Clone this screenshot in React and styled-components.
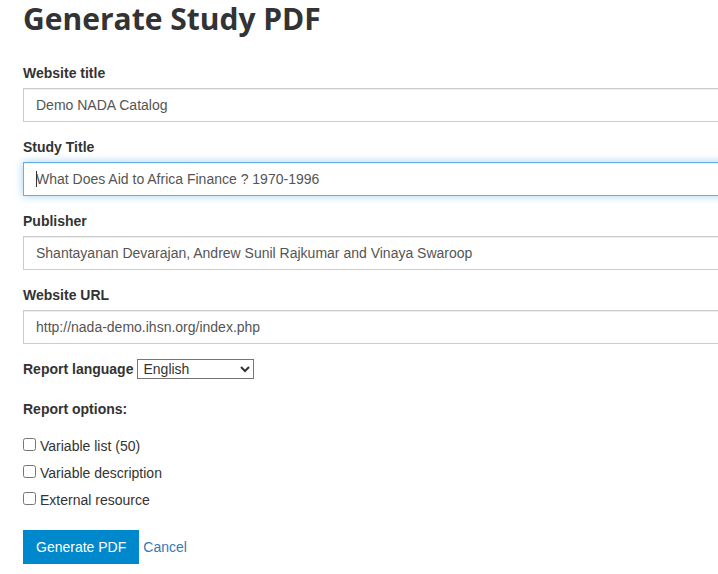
import React, { useState } from "react";
import styled, { createGlobalStyle } from "styled-components";

const GlobalStyle = createGlobalStyle`
  *, *::before, *::after { box-sizing: border-box; }
  body {
    margin: 0;
    overflow-x: hidden;
    background: #fff;
    color: #333;
    font: 14px/20px "Liberation Sans", Arial, sans-serif;
  }
`;

const Form = styled.form`
  padding: 1px 0 10px 23px;
`;

const Title = styled.h1`
  margin: 0 0 27px;
  font: 700 30px/35px "Open Sans", sans-serif;
`;

const Field = styled.div`
  margin-bottom: 15px;
`;

const Label = styled.label`
  display: block;
  margin-bottom: 5px;
  font-weight: 700;
`;

const InputWrap = styled.div`
  position: relative;
`;

const TextInput = styled.input`
  display: block;
  width: calc(100% + 16px);
  height: 34px;
  padding: 6px 12px;
  border: 1px solid #ccc;
  border-radius: 0;
  box-shadow: inset 0 1px 1px rgba(0, 0, 0, 0.075);
  background: #fff;
  color: #555;
  caret-color: ${({ $steadyCaret }) => ($steadyCaret ? "transparent" : "auto")};
  font: inherit;
  outline: 0;

  &:focus {
    border-color: #66afe9;
    box-shadow: inset 0 1px 1px rgba(0, 0, 0, 0.075), 0 0 8px rgba(102, 175, 233, 0.6);
  }
`;

const Caret = styled.span`
  position: absolute;
  top: 9px;
  left: 13px;
  width: 1px;
  height: 16px;
  background: #333;
  pointer-events: none;
`;

const LanguageRow = styled.div`
  display: flex;
  align-items: center;
  gap: 4px;
  margin-bottom: 20px;

  label { margin: 0; }
`;

const Select = styled.select`
  width: 117px;
  height: 20px;
  padding: 0 1px;
  border: 1px solid #767676;
  border-radius: 0;
  background: #fff;
  color: #333;
  font: inherit;
`;

const Options = styled.fieldset`
  display: grid;
  gap: 7px;
  margin: 0 0 20px;
  padding: 0;
  border: 0;
`;

const Legend = styled.legend`
  margin-bottom: 17px;
  padding: 0;
  font-weight: 700;
`;

const Option = styled.label`
  display: flex;
  gap: 4px;
`;

const Checkbox = styled.input`
  width: 13px;
  height: 13px;
  margin: 2px 0 0;
`;

const Actions = styled.div`
  display: flex;
  align-items: center;
  gap: 4px;
`;

const SubmitButton = styled.button`
  height: 34px;
  padding: 6px 12px;
  border: 1px solid #0088cc;
  border-radius: 0;
  background: #0088cc;
  color: #fff;
  font: inherit;
`;

const CancelLink = styled.a`
  color: #337ab7;
  text-decoration: none;
`;

const fields = [
  { id: "website-title", label: "Website title", value: "Demo NADA Catalog" },
  { id: "study-title", label: "Study Title", value: "What Does Aid to Africa Finance ? 1970-1996", focused: true },
  { id: "publisher", label: "Publisher", value: "Shantayanan Devarajan, Andrew Sunil Rajkumar and Vinaya Swaroop" },
  { id: "website-url", label: "Website URL", value: "http://nada-demo.ihsn.org/index.php" },
];

const options = ["Variable list (50)", "Variable description", "External resource"];

function TextField({ id, label, value, focused = false }) {
  // A steady caret marks the start of the text until the field is used.
  const [steadyCaret, setSteadyCaret] = useState(focused);
  const release = () => setSteadyCaret(false);

  return (
    <Field>
      <Label htmlFor={id}>{label}</Label>
      <InputWrap>
        <TextInput
          id={id}
          type="text"
          defaultValue={value}
          autoFocus={focused}
          $steadyCaret={steadyCaret}
          onKeyDown={release}
          onMouseDown={release}
        />
        {steadyCaret && <Caret />}
      </InputWrap>
    </Field>
  );
}

export default function App() {
  return (
    <>
      <GlobalStyle />
      <Form onSubmit={(event) => event.preventDefault()}>
        <Title>Generate Study PDF</Title>
        {fields.map((field) => (
          <TextField key={field.id} {...field} />
        ))}
        <LanguageRow>
          <Label htmlFor="language">Report language</Label>
          <Select id="language" defaultValue="English">
            <option>English</option>
          </Select>
        </LanguageRow>
        <Options>
          <Legend>Report options:</Legend>
          {options.map((text) => (
            <Option key={text}>
              <Checkbox type="checkbox" />
              {text}
            </Option>
          ))}
        </Options>
        <Actions>
          <SubmitButton type="submit">Generate PDF</SubmitButton>
          <CancelLink href="#">Cancel</CancelLink>
        </Actions>
      </Form>
    </>
  );
}
